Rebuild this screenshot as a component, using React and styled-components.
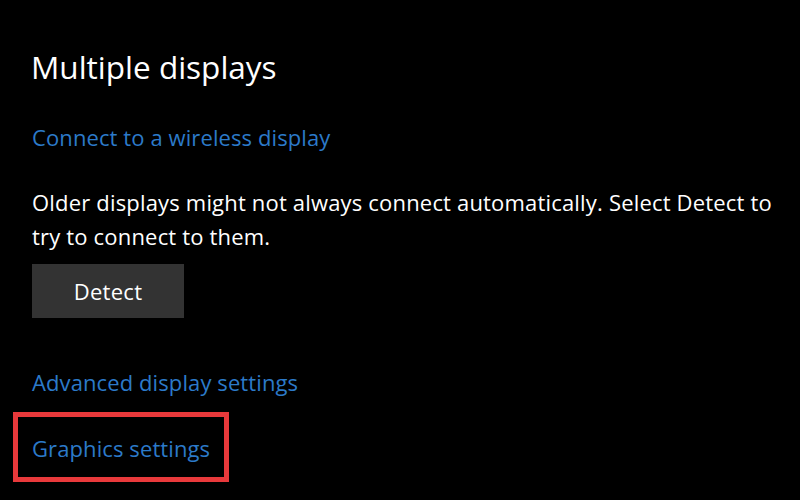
import React from 'react'
import styled, { createGlobalStyle } from 'styled-components'

const GlobalStyle = createGlobalStyle`
  html, body {
    margin: 0;
    padding: 0;
    background: #000;
  }
  body {
    font-family: 'Open Sans', 'Noto Sans', sans-serif;
  }
`

const App = () => (
  <Page>
    <GlobalStyle />
    <Title>Multiple displays</Title>
    <Link>Connect to a wireless display</Link>
    <Description>
      Older displays might not always connect automatically. Select Detect to
      try to connect to them.
    </Description>
    <Button>Detect</Button>
    <Link top="50px">Advanced display settings</Link>
    <Highlight>
      <Link top="0">Graphics settings</Link>
    </Highlight>
  </Page>
)

export default App

const Page = styled.div`
  width: 800px;
  height: 500px;
  background: #000;
  padding: 46px 0 0 32px;
  box-sizing: border-box;
  overflow: hidden;
`

const Title = styled.h1`
  margin: 0 0 0 -1px;
  font-size: 31.5px;
  font-weight: 400;
  line-height: 42px;
  color: #fff;
`

const Link = styled.a`
  display: block;
  margin-top: ${p => p.top || '35px'};
  font-size: 22px;
  line-height: 28px;
  letter-spacing: 0.1px;
  color: #2c7ac9;
  text-decoration: none;
  cursor: pointer;
`

const Description = styled.p`
  margin: 34px 0 0;
  width: 750px;
  font-size: 22px;
  line-height: 34px;
  color: #fff;
  letter-spacing: 0.18px;
`

const Button = styled.button`
  display: flex;
  align-items: center;
  justify-content: center;
  margin-top: 11px;
  width: 152px;
  height: 54px;
  border: none;
  background: #333;
  color: #fff;
  font-family: inherit;
  font-size: 22px;
  letter-spacing: 0.3px;
`

const Highlight = styled.div`
  margin: 16px 0 0 -19px;
  width: 216px;
  height: 70px;
  border: 5px solid #e8393b;
  box-sizing: border-box;
  padding: 17px 0 0 14px;
`
